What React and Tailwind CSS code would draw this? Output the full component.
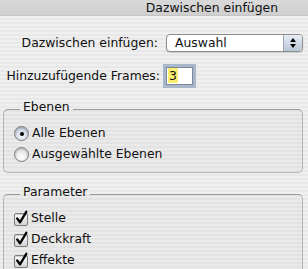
import React from "react";

const font = "font-['DejaVu_Sans',sans-serif] text-[12.4px] text-[#111]";

const Radio = ({ checked, label }) => (
  <div className="flex items-center h-[21px]">
    <div
      className={
        "w-[15px] h-[15px] rounded-full border border-[#7d7d7d] flex items-center justify-center shadow-[inset_0_1px_2px_rgba(0,0,0,0.25)] " +
        (checked
          ? "bg-[radial-gradient(circle_at_50%_70%,#f4f8fc,#b4c2d4)]"
          : "bg-[radial-gradient(circle_at_50%_75%,#ffffff,#d6d6d6)]")
      }
    >
      {checked && <div className="w-[4px] h-[4px] rounded-full bg-black" />}
    </div>
    <span className="ml-[3px]">{label}</span>
  </div>
);

const Check = ({ label }) => (
  <div className="flex items-center h-[21px]">
    <div className="relative w-[14px] h-[13px] mt-[1px] rounded-[2px] border border-[#7d7d7d] bg-[linear-gradient(#ffffff,#d2d2d2)] shadow-[inset_0_1px_1px_rgba(0,0,0,0.2)]">
      <svg
        className="absolute left-[0px] top-[-4px]"
        width="13"
        height="15"
        viewBox="0 0 13 15"
      >
        <path
          d="M2.2 8.5 L5 12.3 L11.3 1.8"
          fill="none"
          stroke="#000"
          strokeWidth="2.3"
          strokeLinecap="round"
          strokeLinejoin="round"
        />
      </svg>
    </div>
    <span className="ml-[3px]">{label}</span>
  </div>
);

const Group = ({ title, children }) => (
  <fieldset className="ml-[3px] mr-[5px] border border-[#b4b4b4] border-t-[#9a9a9a] rounded-[5px] bg-black/[0.02] pl-[10px]">
    <legend className="ml-[6px] px-[3px] leading-[16px] pb-[4px]">{title}</legend>
    <div className="pt-[4px]">{children}</div>
  </fieldset>
);

export default function App() {
  return (
    <div
      className={
        "w-[308px] h-[269px] overflow-hidden bg-[repeating-linear-gradient(180deg,#efefef_0px,#efefef_2px,#e8e8e8_2px,#e8e8e8_4px)] " +
        font
      }
    >
      <div className="h-[16px] bg-[linear-gradient(#d9d9d9,#cfcfcf)] border-b border-[#c4c4c4] flex items-center justify-end pr-[30px] leading-[16px]">
        Dazwischen einfügen
      </div>

      <div className="pt-[18px] grid grid-cols-[160px_1fr] items-center gap-y-[14px]">
        <span className="text-right pr-[2px]">Dazwischen einfügen:</span>
        <div className="ml-[6px] mr-[5px] h-[18px] rounded-[4px] border border-[#8c8c8c] bg-white flex shadow-[0_1px_1px_rgba(0,0,0,0.15)] overflow-hidden">
          <span className="flex-1 pl-[8px] leading-[16px]">Auswahl</span>
          <div className="w-[19px] border-l border-[#9aa4b2] bg-[linear-gradient(#e8eef5,#b9c6d7)] flex flex-col items-center justify-center gap-[2px]">
            <div className="w-0 h-0 border-l-[3px] border-r-[3px] border-b-[4px] border-l-transparent border-r-transparent border-b-black" />
            <div className="w-0 h-0 border-l-[3px] border-r-[3px] border-t-[4px] border-l-transparent border-r-transparent border-t-black" />
          </div>
        </div>

        <span className="text-right">Hinzuzufügende Frames:</span>
        <div className="ml-[6px] w-[27px] h-[18px] bg-white border border-[#7b8798] shadow-[0_0_0_3px_#a9b7ca] flex items-center">
          <span className="ml-[1px] bg-[#fbef72] px-[1px] leading-[15px]">3</span>
        </div>
      </div>

      <div className="mt-[14px]">
        <Group title="Ebenen">
          <Radio checked label="Alle Ebenen" />
          <Radio label="Ausgewählte Ebenen" />
          <div className="h-[7px]" />
        </Group>
      </div>

      <div className="mt-[11px]">
        <Group title="Parameter">
          <Check label="Stelle" />
          <Check label="Deckkraft" />
          <Check label="Effekte" />
          <div className="h-[20px]" />
        </Group>
      </div>
    </div>
  );
}
